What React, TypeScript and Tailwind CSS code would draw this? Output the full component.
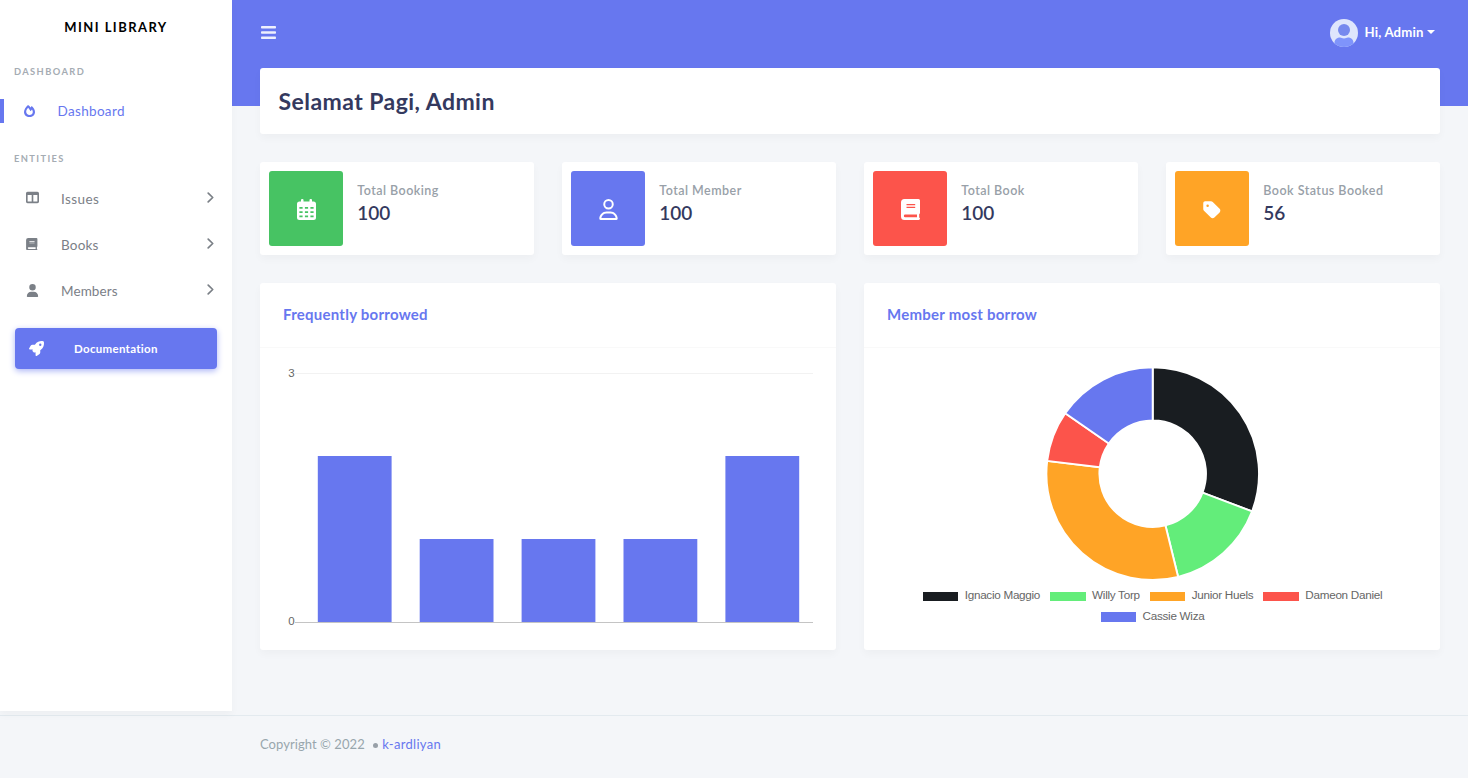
import type { ReactNode } from 'react';
import { FaRegUser, FaRocket, FaTableColumns, FaTag, FaUser } from 'react-icons/fa6';

function MenuIcon() {
  return (
    <svg width="15" height="13" viewBox="0 0 15 13" fill="#eef0fd">
      <rect width="15" height="2.5" rx="0.8" />
      <rect y="5.25" width="15" height="2.5" rx="0.8" />
      <rect y="10.5" width="15" height="2.5" rx="0.8" />
    </svg>
  );
}

function FlameIcon() {
  return (
    <svg width="11" height="12" viewBox="0 0 11 12" fill="currentColor" fillRule="evenodd">
      <path d="M4 0C5 .7 5.9 1.5 6.6 2.4L7.7 1.1C9.5 2.5 11 5 11 6.900 11 9.900 8.600 12 5.500 12S0 9.900 0 6.900C0 4.600 1.900 2 4 0ZM5.100 3.900 4.200 2.700C2.900 4.100 2.200 5.500 2.200 6.800 2.200 8.700 3.700 9.900 5.500 9.900S8.800 8.700 8.800 6.900C8.800 6.200 8.500 5.300 8 4.500L6.600 6.200Z" />
    </svg>
  );
}

function CalendarIcon() {
  return (
    <svg width="19" height="21" viewBox="0 0 19 21" fill="currentColor">
      <rect x="4" width="2.5" height="5" rx="1" />
      <rect x="12.5" width="2.5" height="5" rx="1" />
      <path
        fillRule="evenodd"
        d="M2.500 2.500h14a2.500 2.500 0 0 1 2.500 2.500v13.500a2.500 2.500 0 0 1-2.500 2.500h-14A2.500 2.500 0 0 1 0 18.500V5a2.500 2.500 0 0 1 2.500-2.500ZM2.400 8v1.800h3.200V8ZM7.900 8v1.800h3.200V8ZM13.400 8v1.800h3.200V8ZM2.400 12.200v1.800h3.200V12.200ZM7.900 12.200v1.800h3.200V12.200ZM13.400 12.200v1.800h3.200V12.200ZM2.400 16.400v1.800h3.200v-1.800ZM7.900 16.400v1.800h3.200v-1.800ZM13.400 16.400v1.800h3.200v-1.800Z"
      />
    </svg>
  );
}

function BookIcon({ className }: { className: string }) {
  return (
    <svg viewBox="0 0 19 21" fill="currentColor" className={className}>
      <path
        fillRule="evenodd"
        d="M3.500 0H17.500A1.500 1.500 0 0 1 19 1.500V13.800C19 14.500 18.600 15 18.200 15.300V18.400C18.700 18.600 19 19 19 19.600 19 20.400 18.500 21 17.700 21H3.500A3.500 3.500 0 0 1 0 17.500V3.500A3.500 3.500 0 0 1 3.500 0ZM5.500 5.100V6.200H14.200V5.100ZM5.500 7.800V8.900H14.200V7.800ZM4.200 15.600A1.350 1.350 0 0 0 4.200 18.300H16V15.600Z"
      />
    </svg>
  );
}

function SectionTitle({ children }: { children: ReactNode }) {
  return (
    <h2 className="h-4 pl-3.5 text-[9.3px] leading-4 font-bold tracking-[1.4px] text-[#a5acb3]">
      {children}
    </h2>
  );
}

function NavItem({ icon, label, track }: { icon: ReactNode; label: string; track: string }) {
  return (
    <a className="flex h-[46.4px] items-center pr-[18px] pl-[25px] text-[#7b8087]">
      <span className="flex w-[14px] justify-center pb-0.5 text-[13px]">{icon}</span>
      <span className={`ml-[22px] flex-1 text-[13.5px] ${track}`}>{label}</span>
      <svg width="7" height="11" viewBox="0 0 7 11" className="mb-[3px]" fill="none" stroke="currentColor" strokeWidth="1.7" strokeLinecap="round" strokeLinejoin="round">
        <path d="M1.2 1.1 5.7 5.5 1.2 9.9" />
      </svg>
    </a>
  );
}

function StatCard({
  icon,
  color,
  label,
  value,
}: {
  icon: ReactNode;
  color: string;
  label: string;
  value: string;
}) {
  return (
    <div className="flex h-[92.5px] rounded-[3px] bg-white p-[9.3px] shadow-[0_4px_8px_rgba(0,0,0,0.03)]">
      <div
        className={`flex h-[74.5px] w-[74px] items-center justify-center rounded-[3px] pt-0.5 text-[21px] text-white ${color}`}
      >
        {icon}
      </div>
      <div className="ml-[14px] pt-3">
        <div className="text-[12.5px] leading-4 font-semibold tracking-[0.47px] whitespace-nowrap text-[#98a0a8]">
          {label}
        </div>
        <div className="mt-0.5 text-[19px] leading-6 font-semibold text-[#34395e]">{value}</div>
      </div>
    </div>
  );
}

function ChartCard({ title, children }: { title: string; children: ReactNode }) {
  return (
    <div className="h-[367.5px] rounded-[3px] bg-white shadow-[0_4px_8px_rgba(0,0,0,0.03)]">
      <h4 className="flex h-[65px] items-center border-b border-[#f9f9f9] pb-px pl-[23px] text-[15px] font-bold tracking-[0.25px] text-[#6777ef]">
        {title}
      </h4>
      {children}
    </div>
  );
}

const bars = [2, 1, 1, 1, 2];

function BarChart() {
  return (
    <svg width="576" height="302" viewBox="0 0 576 302" className="block">
      <line x1="35" x2="553" y1="25.5" y2="25.5" stroke="#f2f2f2" />
      <line x1="35" x2="553" y1="274.5" y2="274.5" stroke="#c4c4c4" />
      {bars.map((v, i) => (
        <rect key={i} x={57.8 + i * 101.9} y={274 - v * 83} width="73.8" height={v * 83} fill="#6777ef" />
      ))}
      <g fill="#666" fontFamily="Liberation Sans, sans-serif" fontSize="11.5" textAnchor="end">
        <text x="34.7" y="29">3</text>
        <text x="34.7" y="277">0</text>
      </g>
    </svg>
  );
}

const members = [
  { name: 'Ignacio Maggio', value: 4, color: '#191d21' },
  { name: 'Willy Torp', value: 2, color: '#63ed7a' },
  { name: 'Junior Huels', value: 4, color: '#ffa426' },
  { name: 'Dameon Daniel', value: 1, color: '#fc544b' },
  { name: 'Cassie Wiza', value: 2, color: '#6777ef' },
];

function Doughnut() {
  const total = members.reduce((s, m) => s + m.value, 0);
  const outer = 106.3;
  const inner = 53.3;
  let sum = 0;
  const point = (turn: number, r: number) =>
    `${r * Math.sin(turn * 2 * Math.PI)} ${-r * Math.cos(turn * 2 * Math.PI)}`;
  return (
    <svg width="216" height="216" viewBox="-107.7 -107.7 216 216" className="block">
      {members.map((m) => {
        const a = sum / total;
        sum += m.value;
        const b = sum / total;
        return (
          <path
            key={m.name}
            d={`M${point(a, outer)}A${outer} ${outer} 0 0 1 ${point(b, outer)}L${point(b, inner)}A${inner} ${inner} 0 0 0 ${point(a, inner)}Z`}
            fill={m.color}
            stroke="#fff"
            strokeWidth="1.9"
          />
        );
      })}
    </svg>
  );
}

function Legend({ name, color }: { name: string; color: string }) {
  return (
    <span className="flex items-center whitespace-nowrap">
      <i className="mt-[3px] mr-[6.5px] h-[9.5px] w-[35.5px]" style={{ backgroundColor: color }} />
      {name}
    </span>
  );
}

export default function App() {
  return (
    <div className="h-[778px] w-[1468px] overflow-hidden bg-[#f4f6f9] font-[Lato,sans-serif]">
      <div className="flex h-[715px]">
        <aside className="z-10 h-[711px] w-[232px] shrink-0 bg-white shadow-[0_4px_8px_rgba(0,0,0,0.03)]">
          <div className="h-[55px] text-center text-[13px] leading-[54px] font-bold tracking-[1.45px] text-black">
            MINI LIBRARY
          </div>
          <div className="pt-[9px]">
            <SectionTitle>DASHBOARD</SectionTitle>
          </div>
          <a className="mt-[8px] flex h-[46px] items-center text-[#6777ef]">
            <span className="h-6 w-1 bg-[#6777ef]" />
            <span className="ml-[18px] flex w-[14px] justify-center">
              <FlameIcon />
            </span>
            <span className="ml-[21.5px] pt-px text-[13.5px] tracking-[0.33px]">Dashboard</span>
          </a>
          <div className="mt-[17px]">
            <SectionTitle>ENTITIES</SectionTitle>
          </div>
          <nav className="mt-[8.5px]">
            <NavItem icon={<FaTableColumns />} label="Issues" track="tracking-[0.4px]" />
            <NavItem icon={<BookIcon className="h-[12.5px] w-[11.5px]" />} label="Books" track="tracking-[0.2px]" />
            <NavItem icon={<FaUser />} label="Members" track="tracking-[0.1px]" />
          </nav>
          <a className="mx-[15px] mt-[13.5px] flex h-[41px] items-center rounded bg-[#6777ef] text-white shadow-[0_2px_6px_#acb5f6]">
            <FaRocket className="ml-3.5 size-[15px]" />
            <span className="ml-[30px] text-[11.5px] font-bold tracking-[0.3px]">Documentation</span>
          </a>
        </aside>

        <div className="min-w-0 flex-1 bg-[linear-gradient(#6777ef_106.5px,transparent_106.5px)] px-7">
          <header className="flex h-[67.5px] items-center justify-between pb-[2px] pl-[0.5px] text-white">
            <MenuIcon />
            <div className="flex items-center pr-[5px]">
              <svg width="28" height="28" viewBox="0 0 28 28">
                <clipPath id="avatar-clip">
                  <circle cx="14" cy="14" r="14" />
                </clipPath>
                <g clipPath="url(#avatar-clip)">
                  <rect width="28" height="28" fill="#dfe6fc" />
                  <path d="M4.5 28v-4c0-4 3-5.5 5.5-5.5 1.5 0 2 .9 4 .9s2.500-.9 4-.9c2.500 0 5.500 1.500 5.500 5.500v4Z" fill="#7f94fb" />
                  <circle cx="14" cy="11" r="6" fill="#7689ee" />
                </g>
              </svg>
              <span className="ml-[7px] text-[13.2px] font-bold tracking-[0.15px]">Hi, Admin</span>
              <span className="mb-0.5 ml-[3.5px] h-0 w-0 border-x-4 border-t-4 border-x-transparent border-t-white" />
            </div>
          </header>

          <main>
            <div className="flex h-[66.5px] items-center rounded-[3px] bg-white pt-px pl-[18.5px] shadow-[0_4px_8px_rgba(0,0,0,0.03)]">
              <h1 className="text-[23px] font-bold tracking-[0.45px] text-[#34395e]">Selamat Pagi, Admin</h1>
            </div>

            <div className="mt-7 grid grid-cols-4 gap-x-7">
              <StatCard icon={<CalendarIcon />} color="bg-[#47c363]" label="Total Booking" value="100" />
              <StatCard icon={<FaRegUser />} color="bg-[#6777ef]" label="Total Member" value="100" />
              <StatCard icon={<BookIcon className="h-[21px] w-[19px]" />} color="bg-[#fc544b]" label="Total Book" value="100" />
              <StatCard icon={<FaTag className="size-[20px]" />} color="bg-[#ffa426]" label="Book Status Booked" value="56" />
            </div>

            <div className="mt-7 grid grid-cols-2 gap-x-7">
              <ChartCard title="Frequently borrowed">
                <BarChart />
              </ChartCard>
              <ChartCard title="Member most borrow">
                <div className="flex flex-col items-center pt-[18px] pl-px font-['Liberation_Sans',sans-serif] text-[11.7px] text-[#666]">
                  <Doughnut />
                  <div className="mt-[3.5px] flex h-[20.5px] items-center gap-x-[10px] tracking-[-0.28px]">
                    {members.slice(0, 4).map((m) => (
                      <Legend key={m.name} name={m.name} color={m.color} />
                    ))}
                  </div>
                  <div className="flex h-[20.5px] items-center tracking-[-0.28px]">
                    <Legend name={members[4].name} color={members[4].color} />
                  </div>
                </div>
              </ChartCard>
            </div>
          </main>
        </div>
      </div>

      <footer className="flex h-[63px] items-center border-t border-[#e3eaef] pb-[5px] pl-[260px] text-[13px] text-[#98a6ad]">
        <span className="tracking-[0.06px]">Copyright © 2022</span>
        <span className="mt-0.5 mr-[4.5px] ml-[8px] size-[5px] rounded-full bg-[#98a0a8]" />
        <a className="tracking-[0.29px] text-[#6777ef]">k-ardliyan</a>
      </footer>
    </div>
  );
}
